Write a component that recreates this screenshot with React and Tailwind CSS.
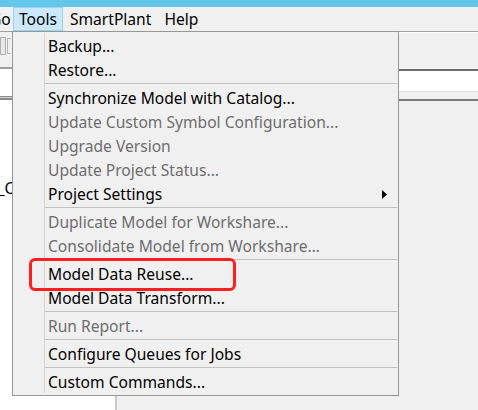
import React from "react";

const menuItems = [
    { label: "Backup..." },
    { label: "Restore..." },
    { separator: true },
    { label: "Synchronize Model with Catalog..." },
    { label: "Update Custom Symbol Configuration...", disabled: true },
    { label: "Upgrade Version", disabled: true },
    { label: "Update Project Status...", disabled: true },
    { label: "Project Settings", submenu: true },
    { separator: true },
    { label: "Duplicate Model for Workshare...", disabled: true },
    { label: "Consolidate Model from Workshare...", disabled: true },
    { separator: true },
    { label: "Model Data Reuse..." },
    { label: "Model Data Transform..." },
    { separator: true },
    { label: "Run Report...", disabled: true },
    { separator: true },
    { label: "Configure Queues for Jobs" },
    { separator: true },
    { label: "Custom Commands..." },
];

const MenuBar = () => (
    <div className="flex h-[24px] items-stretch bg-[#f0f0f0] text-black">
        <span className="flex items-center -ml-[10px] w-[23px] pt-[2px]">Go</span>
        <span className="flex items-center border border-[#99d1ff] bg-[#cce8ff] px-[5px] pt-[2px]">Tools</span>
        <span className="flex items-center pl-[7px] pr-[6px] pt-[2px]">SmartPlant</span>
        <span className="flex items-center px-[7px] pt-[2px]">Help</span>
    </div>
);

const ToolsMenu = () => (
    <div className="absolute left-[12px] top-[31px] w-[387px] border border-[#979797] bg-[#f0f0f0] pt-px pb-[2px]">
        {menuItems.map((item, i) =>
            item.separator ? (
                <div key={i} className="flex h-[4px]">
                    <div className="w-[31px]" />
                    <div className="flex flex-1 items-center border-l border-[#d7d7d7] pr-px">
                        <div className="h-px w-full bg-[#c0c0c0]" />
                    </div>
                </div>
            ) : (
                <div key={i} className="flex h-[24px]">
                    <div className="w-[31px]" />
                    <div
                        className={`flex flex-1 items-center border-l border-[#d7d7d7] pl-[3px] ${item.disabled ? "text-[#6d6d6d]" : "text-black"}`}
                    >
                        <span className="pt-[4px]">{item.label}</span>
                        {item.submenu && (
                            <svg className="ml-auto mr-[11px] mt-[2px]" width="5" height="9" viewBox="0 0 5 9">
                                <path d="M0 0 L5 4.5 L0 9 Z" fill="#000" />
                            </svg>
                        )}
                    </div>
                </div>
            )
        )}
    </div>
);

export default function App() {
    return (
        <div className="relative h-[410px] w-[478px] overflow-hidden bg-[#f0f0f0] font-['Noto_Sans',sans-serif] text-[15.6px] leading-none">
            <div className="h-[7px] bg-[#63c7ea]" />
            <MenuBar />
            <div className="flex h-[379px]">
                {/* left tree pane */}
                <div className="flex w-[117px] flex-col border-r-2 border-[#c8c8c8]">
                    <div className="flex h-[26px] items-center gap-[1px] pl-0 pt-[3px] border-t border-[#a0a0a0]">
                        <div className="h-[18px] w-[6px] border border-[#b0b0b0] bg-[#e8e8e8]" />
                        <div className="h-[16px] w-[4px] border-l border-y border-[#b8b8b8]" />
                    </div>
                    <div className="h-[10px]" />
                    <div className="h-[2px] bg-[#a0a0a0]" />
                    <div className="h-[27px] bg-white" />
                    <div className="h-[1px] bg-[#8a8a8a]" />
                    <div className="h-[1px] bg-[#d0d0d0]" />
                    <div className="h-[2px] bg-[#8a8a8a]" />
                    <div className="flex-1 bg-white pt-[81px]">
                        <span className="-ml-[12px] text-black">R_C</span>
                    </div>
                </div>
                {/* right property pane */}
                <div className="flex flex-1 flex-col">
                    <div className="h-px bg-[#a0a0a0]" />
                    <div className="h-px bg-white" />
                    <div className="h-[36px]" />
                    <div className="h-[2px] bg-[#6d6d6d]" />
                    <div className="h-[20px] bg-white" />
                    <div className="h-px bg-[#e3e3e3]" />
                    <div className="h-[7px]" />
                    <div className="h-[2px] bg-[#7a7a7a]" />
                    <div className="flex-1" />
                </div>
            </div>
            <ToolsMenu />
            {/* annotation highlight */}
            <div className="absolute left-[29px] top-[258px] h-[33px] w-[207px] rounded-[6px] border-[3px] border-[#ff1f1f]" />
        </div>
    );
}
